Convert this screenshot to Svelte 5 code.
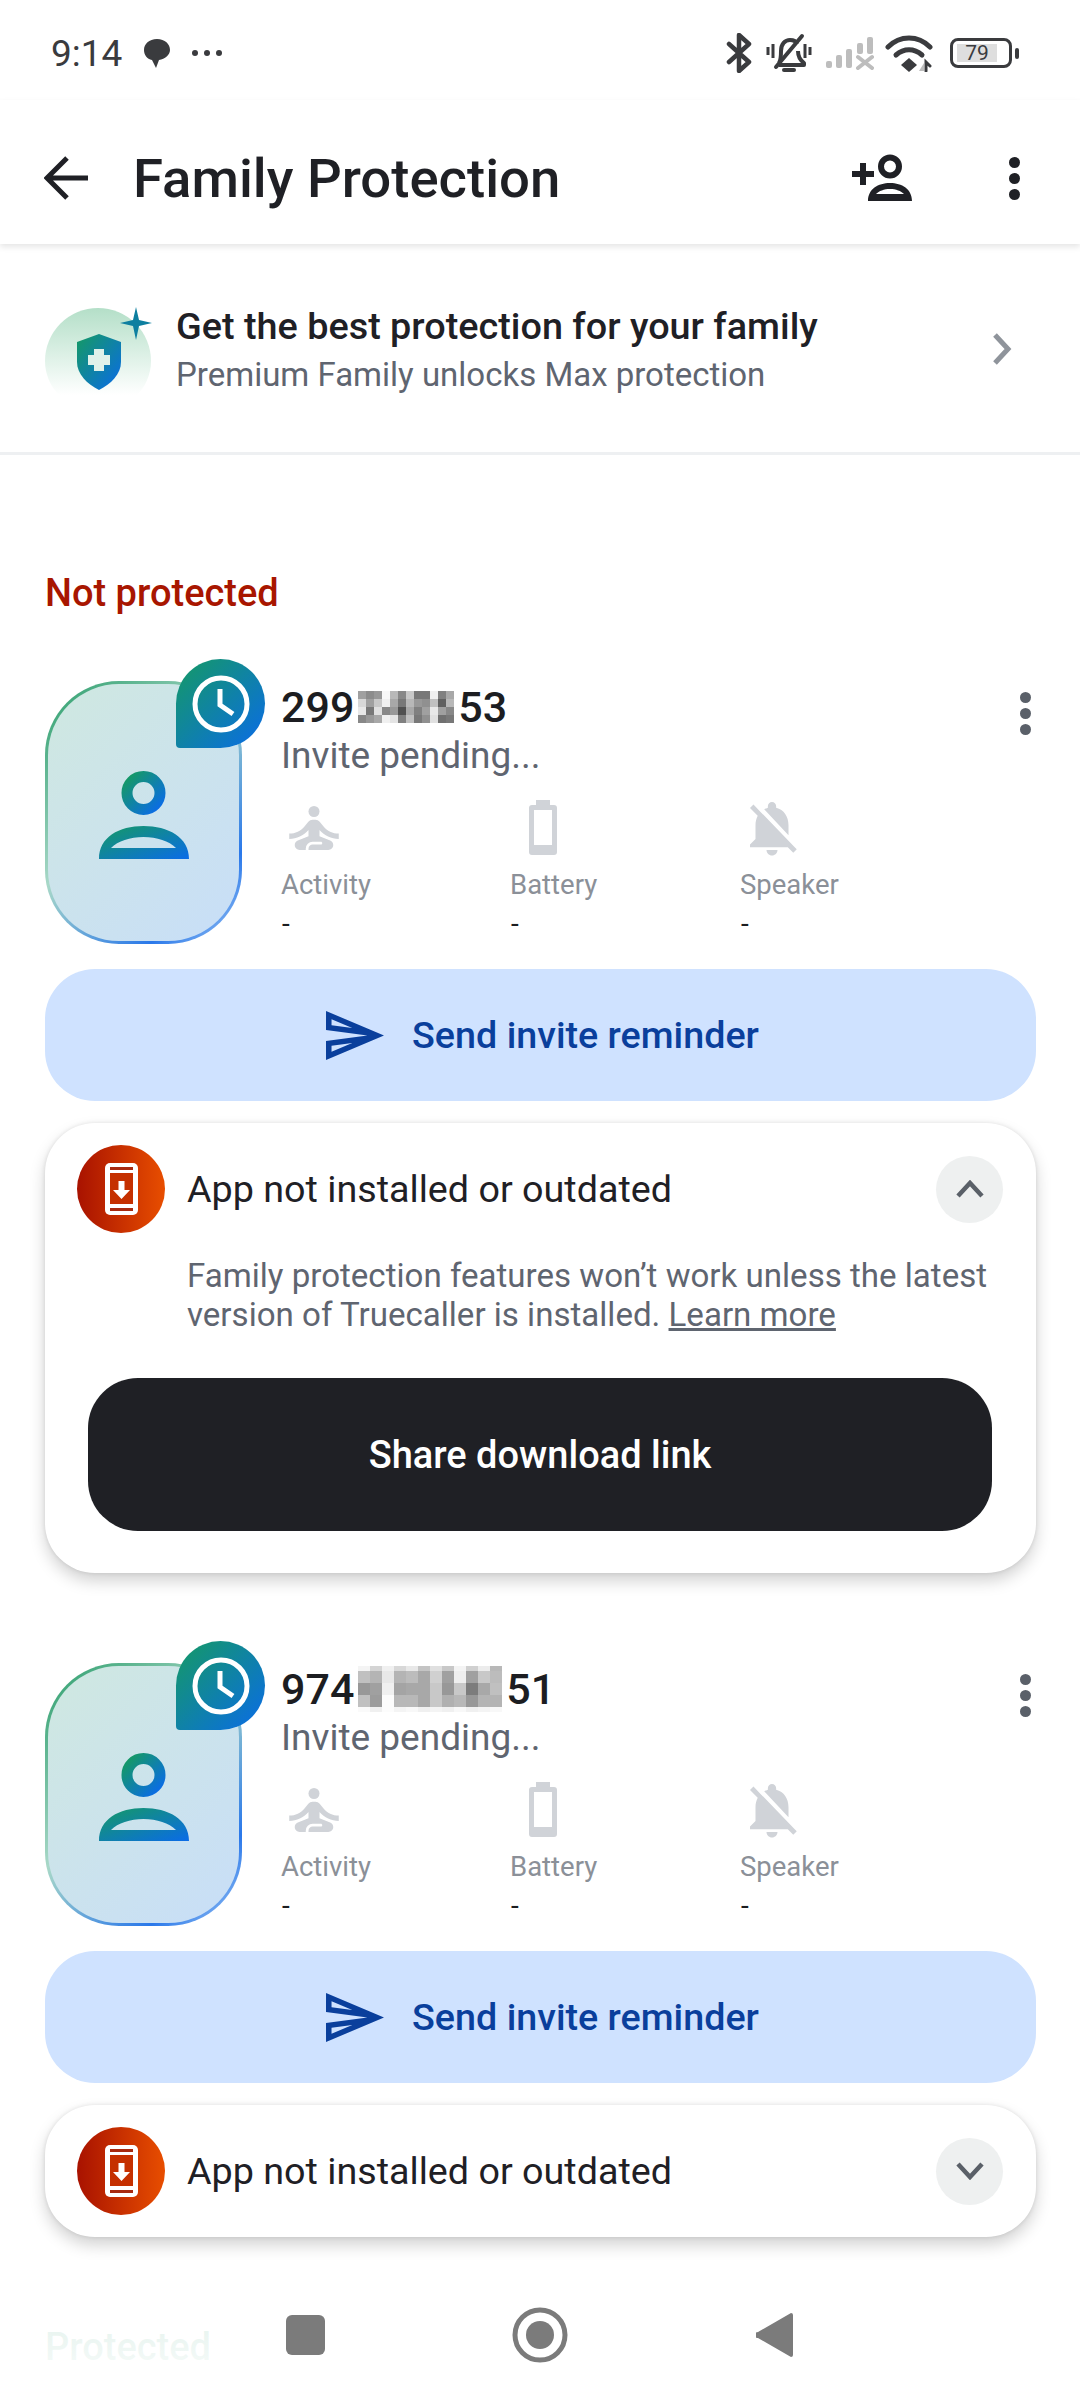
<script>
	const contacts = [
		{
			start: '299',
			end: '53',
			cell: 8,
			rows: [8, 8, 8, 8],
			mosaic: [
				'a0 8c 98 f8 b8 88 c8 78 78 f0 80 a8',
				'd8 a0 c8 f0 a8 78 b8 98 90 c0 60 b8',
				'e8 78 e0 88 98 50 a8 80 a0 e8 a0 88',
				'88 98 a8 f0 e4 80 c0 78 90 e0 70 78'
			],
			open: true
		},
		{
			start: '974',
			end: '51',
			cell: 12,
			rows: [5, 12, 12, 12, 5],
			mosaic: [
				'f4 d4 f0 d8 e8 c4 e0 c8 f4 d0 ec b8',
				'c0 b4 e8 b4 bc a8 d0 a0 ee a0 c8 bc',
				'98 a0 f0 a4 a8 a8 c8 98 c8 7c a8 c0',
				'c0 9c fc b8 b8 a8 c8 b0 b8 98 b4 b4',
				'fa f0 fc f4 f8 f0 f4 f0 f8 f0 f4 f8'
			],
			open: false
		}
	];

	// flatten the blurred digits into grid cells
	const cells = (rows) => rows.flatMap((r) => r.split(' '));
</script>

<svg class="defs" width="0" height="0" aria-hidden="true">
	<defs>
		<linearGradient id="brand" x1="0" y1="0" x2="1" y2="1">
			<stop offset="0" stop-color="#159a63" />
			<stop offset="1" stop-color="#0a6be8" />
		</linearGradient>
		<linearGradient id="hot" x1="0" y1="0" x2="1" y2="0">
			<stop offset="0" stop-color="#a81200" />
			<stop offset="1" stop-color="#e84e00" />
		</linearGradient>
		<linearGradient id="halo" x1="0" y1="0" x2="0" y2="1">
			<stop offset="0" stop-color="#b4dfc8" />
			<stop offset="1" stop-color="#b4dfc8" stop-opacity="0" />
		</linearGradient>
	</defs>
</svg>

{#snippet appIcon()}
	<svg class="app-icon" width="88" height="88" viewBox="0 0 88 88">
		<circle cx="44" cy="44" r="44" fill="url(#hot)" />
		<rect x="28" y="18" width="33" height="52" rx="5" fill="#fff" />
		<rect x="33" y="22" width="23" height="3" fill="#a82a10" />
		<rect x="33" y="28" width="23" height="31" fill="#c53000" />
		<rect x="33" y="63" width="23" height="3" fill="#a82a10" />
		<path d="M41.5 36h6v9h5.5l-8.5 9-8.5-9h5.5z" fill="#fff" />
	</svg>
{/snippet}

<div class="page">
	<div class="statusbar">
		<div class="status-left">
			<span class="time">9:14</span>
			<svg class="bubble" width="28" height="32" viewBox="0 0 28 32">
				<path d="M14 2C6 2 1 7 1 13c0 5 3 9 8 10l4 8 3-8c6-1 11-5 11-10C27 7 22 2 14 2z" fill="#3a3b3e" />
			</svg>
			<span class="more-dots"><i></i><i></i><i></i></span>
		</div>
		<div class="status-right">
			<svg width="26" height="40" viewBox="0 0 26 40" fill="none" stroke="#3a3b3e" stroke-width="4.5" stroke-linejoin="round" stroke-linecap="round">
				<path d="M3 11l20 18-10 9V2l10 9L3 29" />
			</svg>
			<svg width="46" height="40" viewBox="0 0 46 40" fill="none" stroke="#3a3b3e" stroke-width="4">
				<path d="M13 30c2-3 2-6 2-12 0-7 4-11 9-11 3 0 6 1 7 4M32 18c0 6 2 9 6 12v2H13" stroke-linejoin="round" />
				<path d="M10 34L36 3" stroke-linecap="round" />
				<path d="M18 37h10" stroke-linecap="round" />
				<path d="M2 14v8M7 11v14M39 11v14M44 14v8" stroke-width="3" />
			</svg>
			<svg class="signal" width="48" height="34" viewBox="0 0 48 34" fill="#bdbdbd">
				<rect x="0" y="25" width="6" height="7" rx="2" />
				<rect x="10" y="19" width="6" height="13" rx="2" />
				<rect x="20" y="13" width="6" height="19" rx="2" />
				<rect x="31" y="7" width="6" height="11" rx="2" />
				<rect x="41" y="1" width="6" height="17" rx="2" />
				<path d="M32 21l14 11M46 21L32 32" stroke="#bdbdbd" stroke-width="4" stroke-linecap="round" />
			</svg>
			<svg class="wifi" width="48" height="38" viewBox="0 0 48 38" fill="none" stroke="#3a3b3e" stroke-width="5" stroke-linecap="round">
				<path d="M3 13C15 1 33 1 45 13" />
				<path d="M11 21c8-7 18-7 26 0" />
				<path d="M24 24l8 7-8 7-8-7z" fill="#3a3b3e" stroke="none" />
				<path d="M34 37l5-8v8z" fill="#bdbdbd" stroke="none" />
				<path d="M41 37v-9l4 4" stroke-width="3" />
			</svg>
			<div class="battery">
				<div class="battery-body"><span class="battery-level">79</span></div>
				<i class="battery-nub"></i>
			</div>
		</div>
	</div>

	<header class="toolbar">
		<svg class="back" width="44" height="44" viewBox="0 0 44 44" fill="none" stroke="#1f2025" stroke-width="5">
			<path d="M44 22H4M23 2L3 22l20 20" />
		</svg>
		<h1>Family Protection</h1>
		<svg class="add-person" width="62" height="48" viewBox="0 0 62 48" fill="#1f2025">
			<path d="M9 9h6v8h8v6h-8v8H9v-8H1v-6h8z" />
			<circle cx="39" cy="12.500" r="9" fill="none" stroke="#1f2025" stroke-width="6" />
			<path fill-rule="evenodd" d="M17 47c0-12 10-18 22-18s22 6 22 18zM25 40h28c-3-3-8-5-14-5s-11 2-14 5z" />
		</svg>
		<span class="kebab dark"><i></i><i></i><i></i></span>
	</header>

	<div class="promo">
		<svg class="promo-icon" width="110" height="90" viewBox="0 0 110 90">
			<path d="M1 54a53 53 0 0 1 106 0c0 14-6 26-14 34H15C7 80 1 68 1 54z" fill="url(#halo)" />
			<path d="M33 35l22-8 22 8v20c0 12-10 22-22 28-12-6-22-16-22-28z" fill="url(#brand)" />
			<path d="M50 42h10v6h6v10h-6v6H50v-6h-6V48h6z" fill="#dff1ea" />
			<path d="M92 0l3 13 13 3-13 3-3 14-3-14-13-3 13-3z" fill="#0e7fa0" />
		</svg>
		<div class="promo-text">
			<div class="promo-title">Get the best protection for your family</div>
			<div class="promo-sub">Premium Family unlocks Max protection</div>
		</div>
		<svg class="promo-chevron" width="20" height="32" viewBox="0 0 20 32" fill="none" stroke="#8f949b" stroke-width="5">
			<path d="M3 2l13 14L3 30" />
		</svg>
	</div>

	<h2 class="section-title">Not protected</h2>

	{#each contacts as c}
		<section class="contact">
			<div class="contact-top">
				<div class="avatar">
					<svg width="90" height="90" viewBox="0 0 90 90">
						<circle cx="44.500" cy="24" r="16.500" fill="none" stroke="url(#brand)" stroke-width="11" />
						<path fill-rule="evenodd" fill="url(#brand)" d="M0 90C0 68 20 57 44.500 57S90 68 90 90zM12 79h65C70 72 58 68 44.500 68S19 72 12 79z" />
					</svg>
					<div class="badge">
						<svg width="58" height="58" viewBox="0 0 58 58" fill="none" stroke="#fff" stroke-width="5">
							<circle cx="29" cy="29" r="26" />
							<path d="M28 14v16l13 9" />
						</svg>
					</div>
				</div>
				<div class="info">
					<div class="name">
						<span>{c.start}</span>
						<div class="mosaic" style="grid-template-columns: repeat(12, {c.cell}px); grid-template-rows: {c.rows.map((h) => h + 'px').join(' ')};">
							{#each cells(c.mosaic) as g}
								<i style="background: #{g}{g}{g};"></i>
							{/each}
						</div>
						<span>{c.end}</span>
					</div>
					<div class="pending">Invite pending...</div>
					<div class="stats">
						<div class="stat">
							<svg width="66" height="66" viewBox="0 0 24 24" fill="#d0d3d8">
								<circle cx="12" cy="6" r="2" />
								<path d="M21 16v-2c-2.240 0-4.160-.96-5.600-2.680l-1.340-1.600A1.980 1.980 0 0 0 12.530 9H11.480c-.59 0-1.150.26-1.530.72l-1.340 1.600C7.160 13.040 5.240 14 3 14v2c2.770 0 5.190-1.170 7-3.250V15l-3.880 1.550c-.67.27-1.120.93-1.120 1.650C5 19.180 5.820 20 6.800 20H9v-.5a2.500 2.500 0 0 1 2.500-2.500h3c.28 0 .5.22.5.500s-.22.500-.5.500h-3c-.83 0-1.500.67-1.500 1.500v.5h7.200c.98 0 1.800-.82 1.800-1.800 0-.72-.45-1.380-1.120-1.650L14 15v-2.250c1.810 2.080 4.230 3.250 7 3.250z" />
							</svg>
							<span class="stat-label">Activity</span>
							<span class="stat-value">-</span>
						</div>
						<div class="stat">
							<svg width="66" height="66" viewBox="0 0 66 66" fill="#d0d3d8">
								<path fill-rule="evenodd" d="M23 5h14v5h4a3 3 0 0 1 3 3v44a3 3 0 0 1-3 3H19a3 3 0 0 1-3-3V13a3 3 0 0 1 3-3h4zM21 15v35h18V15z" />
							</svg>
							<span class="stat-label">Battery</span>
							<span class="stat-value">-</span>
						</div>
						<div class="stat">
							<svg width="66" height="66" viewBox="0 0 24 24" fill="#d0d3d8">
								<path d="M20 18.690L7.840 6.140 5.270 3.490 4 4.760l2.800 2.800v.01c-.52.99-.8 2.160-.8 3.420v5l-2 2v1h13.730l2 2L21 19.720l-1-1.030zM12 22c1.110 0 2-.89 2-2h-4c0 1.110.89 2 2 2zm6-7.320V11c0-3.080-1.640-5.640-4.500-6.320V4c0-.83-.67-1.500-1.500-1.500s-1.500.67-1.500 1.500v.68c-.15.03-.29.08-.42.12-.1.03-.2.07-.3.11h-.01c-.2.08-.4.17-.59.27-.01 0-.01 0-.02.01L18 14.680z" />
							</svg>
							<span class="stat-label">Speaker</span>
							<span class="stat-value">-</span>
						</div>
					</div>
				</div>
				<span class="kebab gray"><i></i><i></i><i></i></span>
			</div>

			<button class="reminder">
				<svg width="58" height="49" viewBox="2 3 21 18" preserveAspectRatio="none" fill="#0a3f9c">
					<path d="M4.010 6.030l7.510 3.220-7.520-1 .01-2.220m7.500 8.720L4 17.970v-2.220l7.510-1M2.010 3L2 10l15 2-15 2 .01 7L23 12 2.010 3z" />
				</svg>
				Send invite reminder
			</button>

			<div class="warning" class:open={c.open}>
				<div class="warning-head">
					{@render appIcon()}
					<span class="warning-title">App not installed or outdated</span>
					<span class="chevron">
						<svg width="28" height="18" viewBox="0 0 28 18" fill="none" stroke="#5a6068" stroke-width="4.500">
							<path d={c.open ? 'M2 16L14 3l12 13' : 'M2 2l12 13L26 2'} />
						</svg>
					</span>
				</div>
				{#if c.open}
					<p class="warning-text">
						Family protection features won’t work unless the latest version of Truecaller is
						installed. <u>Learn more</u>
					</p>
					<button class="share">Share download link</button>
				{/if}
			</div>
		</section>
	{/each}

	<h2 class="section-title protected">Protected</h2>

	<!-- nav bar floats over the list, content fades out under it -->
	<nav class="navbar">
		<span class="nav-slot"><i class="nav-square"></i></span>
		<span class="nav-slot">
			<svg width="56" height="56" viewBox="0 0 56 56">
				<circle cx="28" cy="28" r="25" fill="none" stroke="#7b7b7b" stroke-width="5" />
				<circle cx="28" cy="28" r="14" fill="#7b7b7b" />
			</svg>
		</span>
		<span class="nav-slot">
			<svg width="38" height="46" viewBox="0 0 38 46">
				<path d="M35 1a2 2 0 0 1 2 2v40a2 2 0 0 1-2 2L2 26a3 3 0 0 1 0-6z" fill="#7b7b7b" />
			</svg>
		</span>
	</nav>
</div>

<style>
	:global(body) {
		margin: 0;
		background: #fff;
	}

	.defs {
		position: absolute;
	}

	.page {
		position: relative;
		width: 1080px;
		height: 2400px;
		overflow: hidden;
		background: #fff;
		font-family: Roboto, 'Liberation Sans', sans-serif;
		color: #1f2025;
	}

	.statusbar {
		height: 100px;
		padding: 6px 62px 0 51px;
		box-sizing: border-box;
		display: flex;
		justify-content: space-between;
		align-items: center;
	}

	.status-left {
		display: flex;
		align-items: center;
		gap: 18px;
	}

	.time {
		font-size: 37px;
		color: #3a3b3e;
		margin-right: 3px;
	}

	.more-dots {
		display: flex;
		gap: 6px;
		margin-left: 3px;
	}

	.more-dots i {
		width: 6px;
		height: 6px;
		border-radius: 50%;
		background: #3a3b3e;
	}

	.status-right {
		display: flex;
		align-items: center;
		gap: 14px;
	}

	.wifi {
		margin-left: -3px;
		margin-right: 3px;
	}

	.battery {
		display: flex;
		align-items: center;
		gap: 3px;
		margin-right: -1px;
	}

	.battery-body {
		width: 62px;
		height: 30px;
		box-sizing: border-box;
		border: 3px solid #3a3b3e;
		border-radius: 8px;
		padding: 3px 4px;
		display: flex;
	}

	.battery-level {
		width: 40px;
		background: #dedede;
		font-size: 21px;
		line-height: 18px;
		text-align: center;
		color: #3a3b3e;
	}

	.battery-nub {
		width: 4px;
		height: 11px;
		border-radius: 2px;
		background: #3a3b3e;
	}

	.toolbar {
		position: relative;
		height: 144px;
		box-sizing: border-box;
		padding: 12px 60px 0 44px;
		display: flex;
		align-items: center;
		box-shadow: 0 3px 6px rgba(0, 0, 0, 0.1);
	}

	.toolbar h1 {
		margin: 0 0 0 45px;
		flex: 1;
		font-size: 54.5px;
		font-weight: 500;
	}

	.add-person {
		margin-right: 96px;
	}

	.kebab {
		display: flex;
		flex-direction: column;
	}

	.kebab i {
		display: block;
		border-radius: 50%;
	}

	.kebab.dark {
		gap: 5px;
	}

	.kebab.dark i {
		width: 11px;
		height: 11px;
		background: #1f2025;
	}

	.kebab.gray {
		gap: 5px;
		margin-top: 11px;
		margin-right: 5px;
	}

	.kebab.gray i {
		width: 11px;
		height: 11px;
		background: #5a6069;
	}

	.promo {
		height: 211px;
		box-sizing: border-box;
		padding: 2px 68px 0 44px;
		display: flex;
		align-items: center;
		border-bottom: 3px solid #eef0f2;
	}

	.promo-icon {
		margin-right: 22px;
		margin-top: 6px;
	}

	.promo-text {
		flex: 1;
	}

	.promo-title {
		font-size: 37.8px;
		font-weight: 500;
		line-height: 50px;
	}

	.promo-sub {
		font-size: 33px;
		line-height: 47px;
		color: #5f6570;
	}

	.section-title {
		margin: 0;
		padding: 113px 0 0 45px;
		font-size: 38px;
		line-height: 50px;
		font-weight: 500;
		color: #a81600;
	}

	.contact {
		padding: 0 44px 0 45px;
		margin-top: 63px;
	}

	.contact + .contact {
		margin-top: 90px;
	}

	.contact-top {
		display: flex;
		align-items: flex-start;
	}

	.avatar {
		position: relative;
		width: 197px;
		height: 263px;
		flex: none;
		box-sizing: border-box;
		border: 3px solid transparent;
		border-radius: 74px;
		background:
			linear-gradient(135deg, #cfe8e0, #c8def8) padding-box,
			linear-gradient(135deg, #2a9d6a, #a8d8c8 45%, #2a78ea 80%, #a0c8f4) border-box;
		display: flex;
		align-items: center;
		justify-content: center;
		padding-top: 2px;
	}

	.badge {
		position: absolute;
		top: -25px;
		right: -26px;
		width: 89px;
		height: 89px;
		border-radius: 50% 50% 50% 4px;
		background: linear-gradient(135deg, #159a63, #0a6be8);
		display: flex;
		align-items: center;
		justify-content: center;
	}

	.info {
		flex: 1;
		margin-left: 39px;
	}

	.name {
		display: flex;
		align-items: center;
		gap: 4px;
		height: 52px;
		font-size: 43px;
		font-weight: 500;
		color: #1c1d21;
	}

	.mosaic {
		display: grid;
	}

	.mosaic i {
		display: block;
	}

	.pending {
		font-size: 37px;
		line-height: 46px;
		color: #5f6570;
	}

	.stats {
		display: grid;
		grid-template-columns: 229px 230px 200px;
		margin-top: 16px;
	}

	.stat {
		display: flex;
		flex-direction: column;
		align-items: flex-start;
	}

	.stat svg {
		margin-bottom: 4px;
	}

	.stat:nth-child(2) svg {
		margin-left: 3px;
	}

	.stat:nth-child(3) svg {
		margin-left: -1px;
	}

	.stat-label {
		font-size: 27.5px;
		line-height: 40px;
		color: #8b9098;
	}

	.stat-value {
		font-size: 28px;
		line-height: 38px;
		color: #1c1d21;
		margin-left: 1px;
	}

	.reminder {
		width: 100%;
		height: 132px;
		margin-top: 25px;
		padding: 0 0 0 4px;
		border: none;
		border-radius: 50px;
		background: #cfe2ff;
		color: #0a3f9c;
		font: 500 37.7px Roboto, sans-serif;
		display: flex;
		align-items: center;
		justify-content: center;
		gap: 28px;
	}

	.warning {
		margin-top: 22px;
		padding: 22px 33px 22px 32px;
		border-radius: 50px;
		background: #fff;
		box-shadow:
			0 8px 16px rgba(0, 0, 0, 0.18),
			0 0 4px rgba(0, 0, 0, 0.1);
	}

	.warning.open {
		padding-bottom: 42px;
	}

	.warning-head {
		display: flex;
		align-items: center;
		height: 88px;
	}

	.warning-title {
		flex: 1;
		margin-left: 22px;
		font-size: 37.7px;
	}

	.chevron {
		width: 67px;
		height: 67px;
		border-radius: 50%;
		background: #eef0f0;
		display: flex;
		align-items: center;
		justify-content: center;
	}

	.warning-text {
		margin: 23px -3px 0 110px;
		font-size: 33.1px;
		line-height: 39px;
		color: #5f6570;
	}

	.share {
		display: block;
		width: 904px;
		height: 153px;
		margin: 44px 0 0 11px;
		border: none;
		border-radius: 50px;
		background: #1f2025;
		color: #fff;
		font: 500 38px Roboto, sans-serif;
	}

	.protected {
		padding-top: 85px;
		color: #0a8a5a;
	}

	.navbar {
		position: absolute;
		left: 0;
		right: 0;
		bottom: 0;
		height: 130px;
		box-sizing: border-box;
		display: flex;
		justify-content: center;
		align-items: center;
		gap: 155px;
		background: linear-gradient(rgba(255, 255, 255, 0), rgba(255, 255, 255, 0.9) 40%, #fff);
	}

	.nav-slot {
		width: 80px;
		display: flex;
		justify-content: center;
	}

	.nav-square {
		display: block;
		width: 39px;
		height: 40px;
		border-radius: 6px;
		background: #7b7b7b;
	}
</style>
